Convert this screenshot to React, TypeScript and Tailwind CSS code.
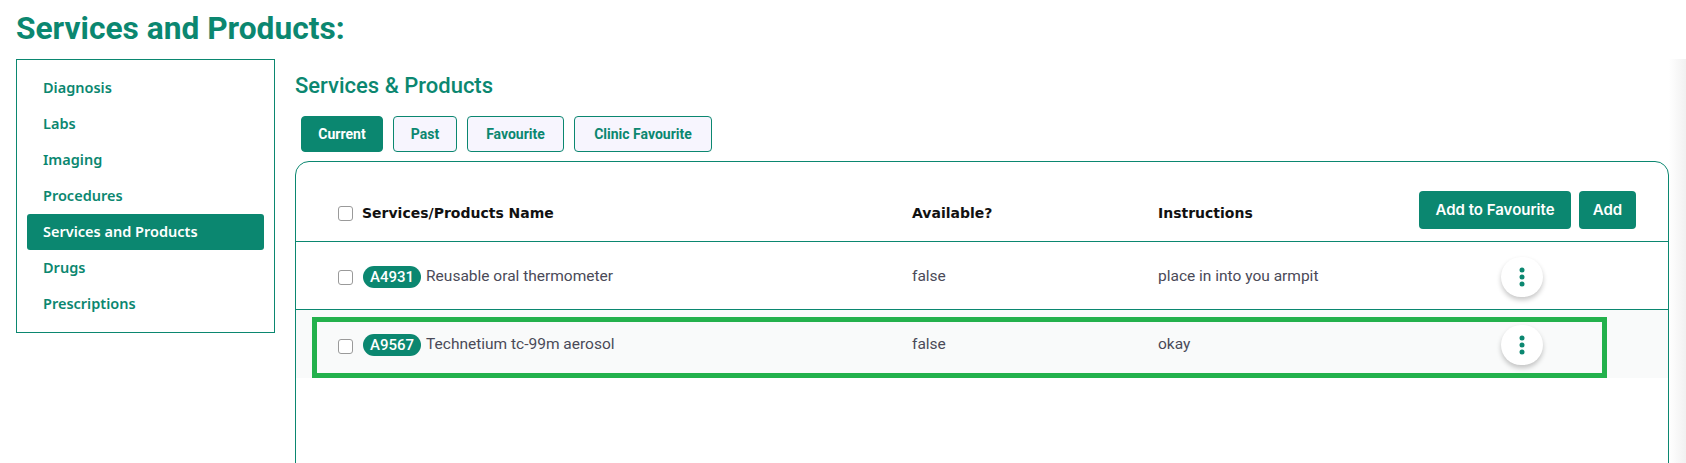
import React from "react";

const GREEN = "#0b8770";

function Kebab() {
  return (
    <div className="w-[42px] h-[40px] rounded-full bg-white shadow-[0_3px_5px_rgba(0,0,0,0.22)] flex items-center justify-center">
      <svg width="6" height="20" viewBox="0 0 6 20">
        <circle cx="3" cy="3" r="2.5" fill={GREEN} />
        <circle cx="3" cy="10" r="2.5" fill={GREEN} />
        <circle cx="3" cy="17" r="2.5" fill={GREEN} />
      </svg>
    </div>
  );
}

function Checkbox() {
  return <div className="w-[15px] h-[15px] rounded-[3px] border border-[#9a9a9a] bg-white shrink-0" />;
}

function Row({ code, name, avail, instr, highlight }: { code: string; name: string; avail: string; instr: string; highlight?: boolean }) {
  return (
    <div className={`relative h-[68px] flex items-center pl-[42px] pt-[2px] ${highlight ? "bg-[#f9fafa]" : "bg-white border-b border-[#0b8770]"}`}>
      <div className="w-[15px] flex items-center mt-[2px]"><Checkbox /></div>
      <div className="w-[559px] pl-[10px] flex items-center">
        <span className="h-[22px] px-[7px] rounded-full bg-[#0b8770] text-white text-[15px] font-medium leading-[22px]">{code}</span>
        <span className="ml-[5px] text-[15.5px] text-[#4a4a58]">{name}</span>
      </div>
      <div className="w-[246px] text-[15.5px] text-[#4a4a58]">{avail}</div>
      <div className="flex-1 text-[15.5px] text-[#4a4a58]">{instr}</div>
      <div className="mr-[125px]"><Kebab /></div>
      {highlight && (
        <div className="absolute left-[16px] top-[7px] w-[1295px] h-[61px] border-[5px] border-[#23b14c] pointer-events-none" />
      )}
    </div>
  );
}

export default function App() {
  const items = ["Diagnosis", "Labs", "Imaging", "Procedures", "Services and Products", "Drugs", "Prescriptions"];
  const tabs = [
    { label: "Current", w: "w-[82px]", active: true },
    { label: "Past", w: "w-[64px]" },
    { label: "Favourite", w: "w-[97px]" },
    { label: "Clinic Favourite", w: "w-[138px]" },
  ];
  const head = { fontFamily: "'DejaVu Sans', sans-serif" };
  return (
    <div className="w-[1686px] h-[463px] overflow-hidden bg-white" style={{ fontFamily: "Roboto, 'Liberation Sans', sans-serif" }}>
      <h1 className="pl-4 pt-[10px] text-[31.7px] leading-[37px] font-bold text-[#0b8770]">Services and Products:</h1>
      <div className="flex mt-[12px]">
        <div className="ml-4 w-[259px] h-[274px] border border-[#0b8770] pt-[10px] px-[10px] shrink-0" style={{ fontFamily: "'Noto Sans', sans-serif" }}>
          {items.map((it) => (
            <div
              key={it}
              className={`h-[36px] flex items-center pl-[16px] text-[14.5px] font-semibold rounded-[3px] ${it === "Services and Products" ? "bg-[#0b8770] text-white" : "text-[#0b8770]"}`}
            >
              {it}
            </div>
          ))}
        </div>
        <div className="ml-[20px] w-[1374px] shrink-0 pt-[12px]">
          <h2 className="text-[22px] leading-[29px] font-medium text-[#0b8770]">Services &amp; Products</h2>
          <div className="flex gap-[10px] ml-[6px] mt-[16px]">
            {tabs.map((t) => (
              <div
                key={t.label}
                className={`${t.w} h-[36px] flex items-center justify-center rounded-[4px] border border-[#0b8770] text-[14px] font-bold ${t.active ? "bg-[#0b8770] text-white" : "bg-[#f7f5fe] text-[#0b8770]"}`}
              >
                {t.label}
              </div>
            ))}
          </div>
          <div className="mt-[9px] h-[400px] border border-[#0b8770] rounded-t-[14px]">
            <div className="h-[80px] border-b border-[#0b8770] flex items-end pb-[12px] pl-[42px] pr-[32px]">
              <div className="h-[38px] flex items-center w-full">
                <div className="w-[15px] mt-[6px]"><Checkbox /></div>
                <div className="w-[559px] pl-[9px] mt-[6px] text-[14px] font-bold text-[#111]" style={head}>Services/Products Name</div>
                <div className="w-[246px] mt-[6px] text-[14px] font-bold text-[#111]" style={head}>Available?</div>
                <div className="flex-1 mt-[6px] text-[14px] font-bold text-[#111]" style={head}>Instructions</div>
                <div className="flex gap-[8px]" style={{ fontFamily: "Inter, sans-serif" }}>
                  <div className="w-[152px] h-[38px] rounded-[4px] bg-[#0b8770] text-white text-[15px] font-semibold flex items-center justify-center">Add to Favourite</div>
                  <div className="w-[57px] h-[38px] rounded-[4px] bg-[#0b8770] text-white text-[15px] font-semibold flex items-center justify-center">Add</div>
                </div>
              </div>
            </div>
            <Row code="A4931" name="Reusable oral thermometer" avail="false" instr="place in into you armpit" />
            <Row code="A9567" name="Technetium tc-99m aerosol" avail="false" instr="okay" highlight />
          </div>
        </div>
        <div className="flex-1 h-[404px] bg-gradient-to-r from-white to-[#f1f1f1]" />
      </div>
    </div>
  );
}
